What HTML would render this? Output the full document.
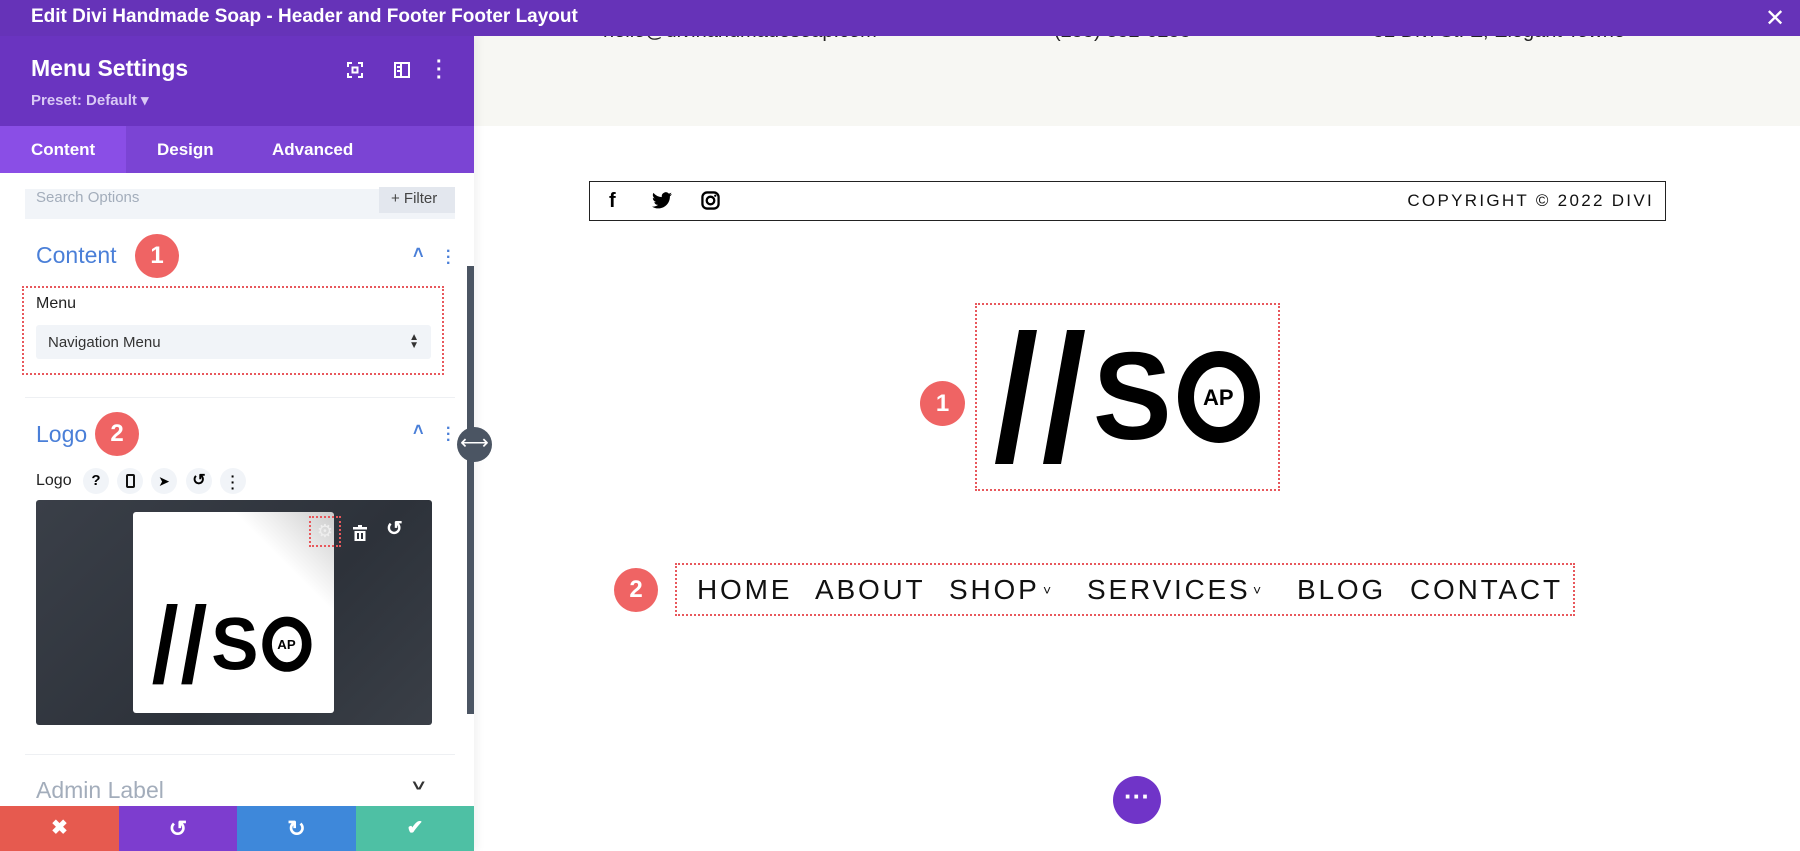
<!DOCTYPE html>
<html><head><meta charset="utf-8"><style>
*{box-sizing:border-box;margin:0;padding:0}
body{width:1800px;height:851px;overflow:hidden;position:relative;background:#fff;font-family:"Liberation Sans",sans-serif}
.a{position:absolute}
.title{left:0;top:0;width:1800px;height:36px;background:#6633b8;color:#fff;font-weight:bold;font-size:19px;line-height:34px;padding-left:31px;z-index:5}
.side{left:0;top:36px;width:474px;height:815px;background:#fff;z-index:3;box-shadow:4px 0 8px rgba(0,0,0,.05)}
.hdr{left:0;top:0;width:474px;height:90px;background:#6a34c0}
.tabs{left:0;top:90px;width:474px;height:47px;background:#7b44d4;color:#fff;font-weight:bold;font-size:17px}
.badge{border-radius:50%;background:#ef6464;color:#fff;font-weight:bold;text-align:center}
.dot{border:2px dotted #e8585c}
.blue{color:#4a7fd8}
.nv{position:absolute;top:574px;font-size:28px;letter-spacing:2.8px;color:#111;white-space:nowrap}
.ch{position:absolute;top:582px;font-size:14px;color:#111}
</style></head><body>
<div class="a title">Edit Divi Handmade Soap - Header and Footer Footer Layout</div>
<div class="a" style="left:1765px;top:4px;color:#fff;font-size:24px;z-index:6">&#x2715;</div>

<div class="a" style="left:474px;top:36px;width:1326px;height:90px;background:#f7f7f3"></div>
<div class="a" style="left:603px;top:20px;font-size:20px;color:#222;z-index:1">hello@divihandmadesoap.com</div>
<div class="a" style="left:1054px;top:20px;font-size:20px;color:#222;z-index:1">(255) 352-6258</div>
<div class="a" style="left:1373px;top:20px;font-size:20px;color:#222;z-index:1">52 Divi St. E, Elegant Towne</div>

<div class="a" style="left:589px;top:181px;width:1077px;height:40px;border:1.5px solid #222"></div>
<div class="a" style="left:609px;top:190px;font-size:20px;font-weight:bold">f</div>
<svg class="a" style="left:652px;top:192px" width="20" height="17" viewBox="0 0 24 20"><path d="M24 2.4a10 10 0 0 1-2.8.8A5 5 0 0 0 23.3.5a10 10 0 0 1-3.1 1.2A4.9 4.9 0 0 0 11.8 6 14 14 0 0 1 1.7.9a4.9 4.9 0 0 0 1.5 6.6A5 5 0 0 1 1 6.9a4.9 4.9 0 0 0 3.9 4.9 5 5 0 0 1-2.2.1 4.9 4.9 0 0 0 4.6 3.4A9.9 9.9 0 0 1 0 17.3 14 14 0 0 0 7.5 19.5c9 0 14-7.5 14-14v-.6A10 10 0 0 0 24 2.4z"/></svg>
<svg class="a" style="left:701px;top:191px" width="19" height="19" viewBox="0 0 20 20"><rect x="1.5" y="1.5" width="17" height="17" rx="5" fill="none" stroke="#000" stroke-width="2.4"/><circle cx="10" cy="10" r="4" fill="none" stroke="#000" stroke-width="2.4"/><circle cx="15" cy="5" r="1.2"/></svg>
<div class="a" style="left:1370px;top:191px;width:284px;text-align:right;font-size:17px;letter-spacing:2.3px;color:#111">COPYRIGHT © 2022 DIVI</div>

<div class="a dot" style="left:975px;top:303px;width:305px;height:188px"></div>
<div class="a badge" style="left:920px;top:381px;width:45px;height:45px;font-size:24px;line-height:45px">1</div>
<svg class="a" style="left:995px;top:325px" width="270" height="150" viewBox="0 0 270 150">
<polygon points="24,5 42,5 18,139 0,139"/><polygon points="72,5 90,5 66,139 48,139"/>
<text x="98" y="114" font-family="Liberation Sans" font-weight="bold" font-size="124" transform="translate(98 0) scale(0.95 1) translate(-98 0)">S</text>
<ellipse cx="224" cy="72" rx="33" ry="38" fill="none" stroke="#000" stroke-width="16"/>
<text x="208" y="80" font-family="Liberation Sans" font-weight="bold" font-size="22">AP</text>
</svg>

<div class="a dot" style="left:675px;top:563px;width:900px;height:53px"></div>
<div class="a badge" style="left:614px;top:568px;width:44px;height:44px;font-size:24px;line-height:44px">2</div>
<div class="nv" style="left:697px">HOME</div>
<div class="nv" style="left:815px">ABOUT</div>
<div class="nv" style="left:949px">SHOP</div>
<div class="ch" style="left:1043px">˅</div>
<div class="nv" style="left:1087px">SERVICES</div>
<div class="ch" style="left:1253px">˅</div>
<div class="nv" style="left:1297px">BLOG</div>
<div class="nv" style="left:1410px">CONTACT</div>

<div class="a" style="left:1113px;top:776px;width:48px;height:48px;border-radius:50%;background:#7034c8;color:#fff;text-align:center;font-size:26px;line-height:40px;font-weight:bold">···</div>

<div class="a side">
 <div class="a hdr">
  <div class="a" style="left:31px;top:19px;color:#fff;font-size:23px;font-weight:bold">Menu Settings</div>
  <div class="a" style="left:31px;top:55px;color:#d9c9f5;font-size:15px;font-weight:bold">Preset: Default ▾</div>
  <svg class="a" style="left:347px;top:26px" width="16" height="16" viewBox="0 0 16 16" fill="none" stroke="#fff" stroke-width="2"><path d="M1 5V1h4M11 1h4v4M15 11v4h-4M5 15H1v-4"/><rect x="5.5" y="5.5" width="5" height="5"/></svg>
  <svg class="a" style="left:394px;top:26px" width="16" height="16" viewBox="0 0 16 16" fill="none" stroke="#fff" stroke-width="2"><rect x="1" y="1" width="14" height="14"/><path d="M7 1v14M3 5h3M3 9h3"/></svg>
  <div class="a" style="left:436px;top:22px;color:#fff;font-size:20px;font-weight:bold;line-height:8px">·<br>·<br>·</div>
 </div>
 <div class="a tabs">
  <div class="a" style="left:0;top:0;width:126px;height:47px;background:#8a4ee6"></div>
  <div class="a" style="left:31px;top:14px">Content</div>
  <div class="a" style="left:157px;top:14px">Design</div>
  <div class="a" style="left:272px;top:14px">Advanced</div>
 </div>
 <div class="a" style="left:25px;top:153px;width:430px;height:30px;background:#f1f4f8"></div>
 <div class="a" style="left:36px;top:153px;color:#a3adbb;font-size:15px">Search Options</div>
 <div class="a" style="left:379px;top:151px;width:76px;height:26px;background:#e3e7ee;color:#444;font-size:15px;padding-left:12px;line-height:24px">+ Filter</div>

 <div class="a blue" style="left:36px;top:206px;font-size:23px">Content</div>
 <div class="a badge" style="left:135px;top:198px;width:44px;height:44px;font-size:24px;line-height:44px">1</div>
 <div class="a blue" style="left:413px;top:207px;font-size:18px;font-weight:bold">˄</div>
 <div class="a blue" style="left:446px;top:213px;font-size:16px;font-weight:bold;line-height:6px">·<br>·<br>·</div>
 <div class="a dot" style="left:22px;top:250px;width:422px;height:89px"></div>
 <div class="a" style="left:36px;top:259px;font-size:16px;color:#222">Menu</div>
 <div class="a" style="left:36px;top:289px;width:395px;height:34px;background:#f1f4f8;border-radius:3px;font-size:15px;color:#333;padding:9px 12px">Navigation Menu<span style="float:right;font-size:10px;line-height:8px">▲<br>▼</span></div>
 <div class="a" style="left:25px;top:361px;width:430px;height:1px;background:#eef0f3"></div>

 <div class="a blue" style="left:36px;top:385px;font-size:23px">Logo</div>
 <div class="a badge" style="left:95px;top:376px;width:44px;height:44px;font-size:24px;line-height:44px">2</div>
 <div class="a blue" style="left:413px;top:384px;font-size:18px;font-weight:bold">˄</div>
 <div class="a blue" style="left:446px;top:390px;font-size:16px;font-weight:bold;line-height:6px">·<br>·<br>·</div>
 <div class="a" style="left:36px;top:436px;font-size:16px;color:#222">Logo</div>
 <div class="a" style="left:83px;top:432px;width:26px;height:26px;border-radius:50%;background:#f1f4f8;text-align:center;font-weight:bold;font-size:15px;line-height:26px">?</div>
 <div class="a" style="left:117px;top:432px;width:26px;height:26px;border-radius:50%;background:#f1f4f8"><div style="margin:6px 9px;width:9px;height:14px;border:2px solid #111;border-radius:2px"></div></div>
 <div class="a" style="left:151px;top:432px;width:26px;height:26px;border-radius:50%;background:#f1f4f8;text-align:center;font-size:14px;line-height:26px">➤</div>
 <div class="a" style="left:186px;top:432px;width:26px;height:26px;border-radius:50%;background:#f1f4f8;text-align:center;font-weight:bold;font-size:16px;line-height:26px">↺</div>
 <div class="a" style="left:220px;top:432px;width:26px;height:26px;border-radius:50%;background:#f1f4f8;text-align:center;font-weight:bold;font-size:14px;line-height:6px;padding-top:5px">·<br>·<br>·</div>

 <div class="a" style="left:36px;top:464px;width:396px;height:225px;background:linear-gradient(135deg,#3a3f48,#2d323a 60%,#3a3f47);border-radius:3px"></div>
 <div class="a" style="left:133px;top:476px;width:201px;height:201px;background:linear-gradient(225deg,#ccc 0%,#fff 25%);border-radius:3px"></div>
 <svg class="a" style="left:142px;top:565px" width="183" height="90" viewBox="0 0 270 150">
 <polygon points="24,5 42,5 18,139 0,139"/><polygon points="72,5 90,5 66,139 48,139"/>
 <text x="98" y="114" font-family="Liberation Sans" font-weight="bold" font-size="124" transform="translate(98 0) scale(0.95 1) translate(-98 0)">S</text>
 <ellipse cx="224" cy="72" rx="33" ry="38" fill="none" stroke="#000" stroke-width="16"/>
 <text x="208" y="80" font-family="Liberation Sans" font-weight="bold" font-size="22">AP</text>
 </svg>
 <div class="a" style="left:309px;top:480px;width:32px;height:31px;border:2px dotted #e8585c;color:#eee;text-align:center;font-size:18px;line-height:27px">⚙</div>
 <svg class="a" style="left:353px;top:489px" width="14" height="16" viewBox="0 0 14 16" fill="#fff"><rect x="0" y="2" width="14" height="2.5"/><rect x="5" y="0" width="4" height="2"/><path d="M1.5 6h11v10h-11z M4 8v6h2V8z M8 8v6h2V8z" fill-rule="evenodd"/></svg>
 <div class="a" style="left:386px;top:480px;color:#fff;font-size:20px;font-weight:bold">↺</div>

 <div class="a" style="left:25px;top:718px;width:430px;height:1px;background:#eef0f3"></div>
 <div class="a" style="left:36px;top:741px;font-size:23px;color:#a3adbb">Admin Label</div>
 <div class="a" style="left:414px;top:742px;font-size:16px;font-weight:bold;color:#333;transform:scaleX(1.4)">˅</div>

 <div class="a" style="left:0;top:770px;width:119px;height:45px;background:#e65a4f;color:#fff;text-align:center;font-size:20px;line-height:45px;font-weight:bold">✖</div>
 <div class="a" style="left:119px;top:770px;width:118px;height:45px;background:#7d3dcf;color:#fff;text-align:center;font-size:22px;line-height:45px;font-weight:bold">↺</div>
 <div class="a" style="left:237px;top:770px;width:119px;height:45px;background:#3e88da;color:#fff;text-align:center;font-size:22px;line-height:45px;font-weight:bold">↻</div>
 <div class="a" style="left:356px;top:770px;width:118px;height:45px;background:#4ec0a4;color:#fff;text-align:center;font-size:20px;line-height:45px;font-weight:bold">✔</div>

 <div class="a" style="left:467px;top:230px;width:7px;height:448px;background:#4b5563"></div>
</div>
<div class="a" style="left:457px;top:427px;width:35px;height:35px;border-radius:50%;background:#4b5563;color:#fff;text-align:center;font-size:20px;line-height:33px;z-index:4">⟷</div>
</body></html>
